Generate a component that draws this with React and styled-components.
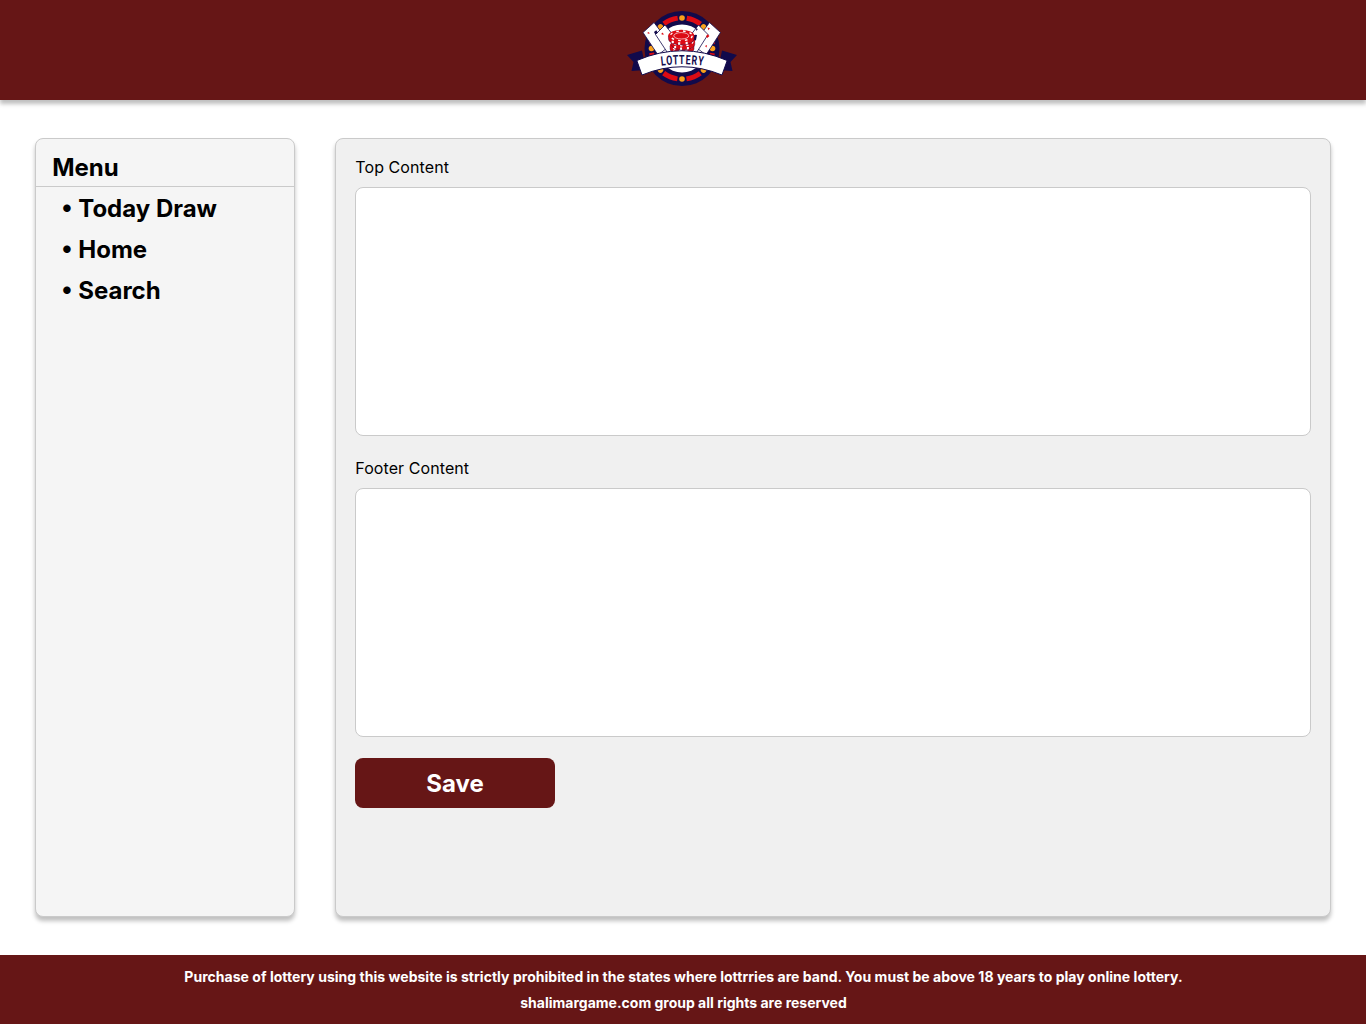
import React from 'react';
import styled, { createGlobalStyle } from 'styled-components';

const Global = createGlobalStyle`
  *, *::before, *::after { box-sizing: border-box; }
  body { margin: 0; background: #fff; color: #000; font-family: Inter, "Liberation Sans", sans-serif; }
`;

const Page = styled.div`
  display: flex;
  flex-direction: column;
  width: 1366px;
  height: 1024px;
`;
const Header = styled.header`
  display: flex;
  justify-content: center;
  height: 100px;
  padding: 8px 2px 0 0;
  background: #661616;
  box-shadow: 0 4px 4px rgba(0, 0, 0, 0.25);
`;
const Main = styled.main`
  display: flex;
  gap: 40px;
  height: 855px;
  padding: 38px 35px;
`;
const Panel = styled.section`
  height: 779px;
  border: 1px solid #cacaca;
  border-radius: 8px;
  box-shadow: 0 4px 4px rgba(0, 0, 0, 0.25);
`;
const Sidebar = styled(Panel).attrs({ as: 'nav' })`
  width: 260px;
  background: #f5f5f5;
`;
const MenuTitle = styled.h2`
  margin: 0;
  height: 48px;
  padding: 14px 0 0 16.2px;
  border-bottom: 1px solid #cacaca;
  font-size: 24px;
  font-weight: 700;
  line-height: 29px;
`;
const MenuList = styled.ul`
  display: flex;
  flex-direction: column;
  gap: 12px;
  margin: 0;
  padding: 7px 0 0 25.2px;
  list-style: none;
`;
const MenuItem = styled.li`
  font-size: 24px;
  font-weight: 700;
  line-height: 29px;
`;
const Content = styled(Panel)`
  display: flex;
  flex-direction: column;
  align-items: flex-start;
  flex: 1;
  padding: 19px 19px 0;
  background: #f0f0f0;
`;
const Fields = styled.div`
  display: flex;
  flex-direction: column;
  gap: 23px;
  width: 100%;
  margin-bottom: 21px;
`;
const Field = styled.label`
  display: flex;
  flex-direction: column;
  gap: 10px;
`;
const FieldName = styled.span`
  padding-left: 0.3px;
  font-size: 16px;
  line-height: 19px;
  letter-spacing: 0.08px;
`;
const TextArea = styled.textarea`
  display: block;
  width: 100%;
  height: 249px;
  border: 1px solid #cacaca;
  border-radius: 8px;
  background: #fff;
  resize: none;
  outline: none;
`;
const SaveButton = styled.button`
  width: 200px;
  height: 50px;
  padding: 0;
  border: 0;
  border-radius: 8px;
  background: #661616;
  color: #fff;
  font: 700 24px/29px Inter, "Liberation Sans", sans-serif;
`;
const Footer = styled.footer`
  height: 69px;
  padding: 9px 0 0 1px;
  background: #661616;
  color: #fff;
  font-size: 14px;
  font-weight: 700;
  line-height: 26px;
  text-align: center;
`;
const FooterLine = styled.p`
  margin: 0;
  letter-spacing: ${(p) => p.$tracking || 0}px;
`;
const BannerText = styled.text`
  fill: #110a4b;
  font-family: Roboto, "Liberation Sans", sans-serif;
  font-size: 13px;
  font-weight: 700;
`;

const NAVY = '#110a4b';
const RED = '#dc0b14';
const GOLD = '#f9a11b';

const LETTERS = [
  ['L', 663.6, 65.4, -6],
  ['O', 669.6, 64.8, -4],
  ['T', 675.8, 64.4, -2],
  ['T', 681.8, 64.2, 0],
  ['E', 688, 64.4, 2],
  ['R', 694.2, 64.8, 4],
  ['Y', 700.4, 65.4, 6],
];

function Chip({ x, y, scale = 1 }) {
  return (
    <g transform={`translate(${x} ${y}) scale(${scale})`}>
      <path d="M-12 0 V3 A12 5.5 0 0 0 12 3 V0 Z" fill={RED} stroke={NAVY} strokeWidth="0.4" />
      <path d="M-8 4.6 V7 M-2 6 V8.3 M5 5.5 V7.8" stroke="#fff" strokeWidth="2" />
      <ellipse rx="12.2" ry="5.6" fill={RED} />
      <ellipse rx="10.2" ry="4.5" fill="none" stroke="#fff" strokeWidth="1.3" strokeDasharray="2.4 3.8" />
      <ellipse rx="7" ry="3" fill={RED} stroke="#fff" strokeWidth="0.6" />
    </g>
  );
}

function Logo() {
  return (
    <svg width="112" height="80" viewBox="626 8 112 80" role="img" aria-label="Lottery">
      <circle cx="682" cy="48.5" r="37.5" fill={NAVY} />
      <circle cx="682" cy="48.5" r="30.7" fill="none" stroke={RED} strokeWidth="5" strokeDasharray="15 9.11" strokeDashoffset="-4.55" />
      <circle cx="682" cy="48.5" r="24" fill="#fff" />
      {[0, 45, 90, 135, 180, 225, 270, 315].map((a) => (
        <circle key={a} cx="682" cy="18" r="2.8" fill={GOLD} transform={`rotate(${a} 682 48.5)`} />
      ))}
      <g fill="#fff" stroke={NAVY} strokeWidth="0.8" strokeLinejoin="round">
        <path d="M654 22.5 L643 32.5 L658 55 L671 45 Z" />
        <path d="M709.5 22.5 L720.5 32.5 L706 55 L693 45 Z" />
        <path d="M665 25 L655.5 34.5 L669 55 L681 45 Z" />
        <path d="M698.5 25 L708 34.5 L695 55 L683 45 Z" />
      </g>
      <path d="M654 32 l2.3 -1.8 l1.6 2.6 l-2.6 1.8z M692 37 q2 -3 5 -2 l-1 5 l-4 3z M695.5 28 l2.3 1 l-1.2 2z" fill={NAVY} />
      <path d="M647 33 l2 -1 l.5 2z M661 34 l2 -1.5 l.6 2.4z M707.5 27.5 l2.4 .8 l-1.4 2z M706 36.5 l1.5 -2.2 l2 1.8 l-2.3 1.9z M705 46 l2 -1 l-.5 2.5z" fill={RED} />
      <Chip x={682} y={46} />
      <Chip x={683} y={41.5} scale={0.98} />
      <Chip x={681.3} y={35.8} scale={1.07} />
      <path d="M627 55 L642 50.5 L646 70 L631.5 71 L633.5 62 Z M737 55 L722 50.5 L718 70 L732.5 71 L730.5 62 Z" fill={NAVY} />
      <path d="M636.8 60.5 Q682 41 727.2 60.5 L722 75 Q682 58.5 642 75 Z" fill="#fff" stroke={NAVY} strokeWidth="1" />
      {LETTERS.map(([char, x, y, angle]) => (
        <BannerText key={x} textAnchor="middle" transform={`translate(${x} ${y}) rotate(${angle}) scale(0.68 1)`}>{char}</BannerText>
      ))}
    </svg>
  );
}

export default function App() {
  return (
    <>
      <Global />
      <Page>
        <Header><Logo /></Header>
        <Main>
          <Sidebar>
            <MenuTitle>Menu</MenuTitle>
            <MenuList>
              {['Today Draw', 'Home', 'Search'].map((item) => (
                <MenuItem key={item}>• {item}</MenuItem>
              ))}
            </MenuList>
          </Sidebar>
          <Content>
            <Fields>
              <Field><FieldName>Top Content</FieldName><TextArea /></Field>
              <Field><FieldName>Footer Content</FieldName><TextArea /></Field>
            </Fields>
            <SaveButton>Save</SaveButton>
          </Content>
        </Main>
        <Footer>
          <FooterLine $tracking={0.03}>Purchase of lottery using this website is strictly prohibited in the states where lottrries are band. You must be above 18 years to play online lottery.</FooterLine>
          <FooterLine>shalimargame.com group all rights are reserved</FooterLine>
        </Footer>
      </Page>
    </>
  );
}
